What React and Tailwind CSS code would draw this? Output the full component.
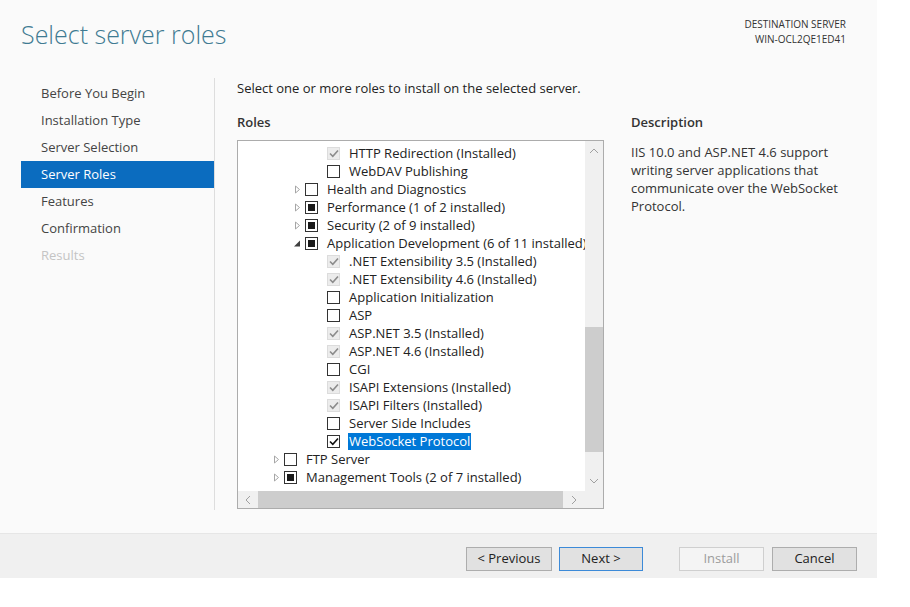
import React from "react";

const FONT = { fontFamily: '"Open Sans", "Noto Sans", sans-serif' };

function Box({ state }) {
  if (state === "installed") {
    return (
      <span className="flex h-[13px] w-[13px] shrink-0 items-center justify-center border border-[#dcdcdc] bg-[#ececec]">
        <svg width="10" height="9" viewBox="0 0 10 9">
          <path d="M1 4.5 L3.8 7.3 L9 1.5" fill="none" stroke="#8c8c8c" strokeWidth="1.6" />
        </svg>
      </span>
    );
  }
  if (state === "checked") {
    return (
      <span className="flex h-[13px] w-[13px] shrink-0 items-center justify-center border border-[#333] bg-white">
        <svg width="10" height="9" viewBox="0 0 10 9">
          <path d="M1 4.5 L3.8 7.3 L9 1.5" fill="none" stroke="#111" strokeWidth="1.6" />
        </svg>
      </span>
    );
  }
  if (state === "partial") {
    return (
      <span className="flex h-[13px] w-[13px] shrink-0 items-center justify-center border border-[#333] bg-white">
        <span className="h-[7px] w-[7px] bg-[#1a1a1a]" />
      </span>
    );
  }
  return <span className="h-[13px] w-[13px] shrink-0 border border-[#333] bg-white" />;
}

function Arrow({ type }) {
  if (type === "collapsed") {
    return (
      <svg width="13" height="9" viewBox="0 0 13 9" className="shrink-0">
        <path d="M3.5 1 L7.5 4.5 L3.5 8 Z" fill="none" stroke="#a6a6a6" strokeWidth="1" />
      </svg>
    );
  }
  if (type === "expanded") {
    return (
      <svg width="13" height="9" viewBox="0 0 13 9" className="shrink-0">
        <path d="M2 7.5 L8 7.5 L8 1.5 Z" fill="#404040" />
      </svg>
    );
  }
  return <span className="w-[13px] shrink-0" />;
}

const rows = [
  { l: 3, s: "installed", t: "HTTP Redirection (Installed)" },
  { l: 3, s: "empty", t: "WebDAV Publishing" },
  { l: 2, a: "collapsed", s: "empty", t: "Health and Diagnostics" },
  { l: 2, a: "collapsed", s: "partial", t: "Performance (1 of 2 installed)" },
  { l: 2, a: "collapsed", s: "partial", t: "Security (2 of 9 installed)" },
  { l: 2, a: "expanded", s: "partial", t: "Application Development (6 of 11 installed)" },
  { l: 3, s: "installed", t: ".NET Extensibility 3.5 (Installed)" },
  { l: 3, s: "installed", t: ".NET Extensibility 4.6 (Installed)" },
  { l: 3, s: "empty", t: "Application Initialization" },
  { l: 3, s: "empty", t: "ASP" },
  { l: 3, s: "installed", t: "ASP.NET 3.5 (Installed)" },
  { l: 3, s: "installed", t: "ASP.NET 4.6 (Installed)" },
  { l: 3, s: "empty", t: "CGI" },
  { l: 3, s: "installed", t: "ISAPI Extensions (Installed)" },
  { l: 3, s: "installed", t: "ISAPI Filters (Installed)" },
  { l: 3, s: "empty", t: "Server Side Includes" },
  { l: 3, s: "checked", t: "WebSocket Protocol", sel: true },
  { l: 1, a: "collapsed", s: "empty", t: "FTP Server" },
  { l: 1, a: "collapsed", s: "partial", t: "Management Tools (2 of 7 installed)" },
];

const indent = { 1: "pl-[33px]", 2: "pl-[54px]", 3: "pl-[76px]" };

const nav = [
  "Before You Begin",
  "Installation Type",
  "Server Selection",
  "Server Roles",
  "Features",
  "Confirmation",
  "Results",
];

function Chevron({ dir }) {
  const d = {
    up: "M1 5 L5 1 L9 5",
    down: "M1 1 L5 5 L9 1",
    left: "M5 1 L1 5 L5 9",
    right: "M1 1 L5 5 L1 9",
  }[dir];
  const horiz = dir === "left" || dir === "right";
  return (
    <svg width={horiz ? 6 : 10} height={horiz ? 10 : 6} viewBox={horiz ? "0 0 6 10" : "0 0 10 6"}>
      <path d={d} fill="none" stroke="#a0a0a0" strokeWidth="1" />
    </svg>
  );
}

function Button({ children, primary, disabled }) {
  return (
    <div
      className={
        "flex h-[24px] items-center justify-center border text-[13px] " +
        (primary
          ? "border-[#3c8ad8] bg-[#e1e1e1] text-[#222]"
          : disabled
          ? "border-[#cfcfcf] bg-[#f4f4f4] text-[#9c9c9c]"
          : "border-[#adadad] bg-[#e1e1e1] text-[#222]")
      }
    >
      {children}
    </div>
  );
}

export default function App() {
  return (
    <div className="h-[607px] w-[910px] overflow-hidden bg-white" style={FONT}>
      <div className="flex h-[578px] w-[877px] flex-col bg-[#fafafa]">
        {/* header */}
        <div className="flex h-[78px] justify-between pl-[21px] pr-[31px]">
          <div className="pt-[16px] text-[25px] font-light leading-[36px] text-[#3f7a92]">
            Select server roles
          </div>
          <div className="pt-[17px] text-right text-[10px] leading-[15px] text-[#333]">
            <div>DESTINATION SERVER</div>
            <div>WIN-OCL2QE1ED41</div>
          </div>
        </div>

        {/* body */}
        <div className="flex h-[455px]">
          {/* nav */}
          <div className="h-[432px] w-[215px] border-r border-[#dddddd] pl-[21px] pt-[2px]">
            {nav.map((n, i) => (
              <div
                key={n}
                className={
                  "flex h-[27px] items-center pl-[20px] text-[13px] " +
                  (i === 3
                    ? "bg-[#0b6cbf] text-white"
                    : i === 6
                    ? "text-[#c4c4c4]"
                    : "text-[#444]")
                }
              >
                {n}
              </div>
            ))}
          </div>

          {/* main */}
          <div className="flex flex-col pl-[22px]">
            <div className="h-[18px] pt-[1px] text-[13px] leading-[18px] text-[#222]">
              Select one or more roles to install on the selected server.
            </div>
            <div className="mt-[17px] h-[18px] text-[13px] font-semibold leading-[18px] text-[#333]">
              Roles
            </div>
            <div className="mt-[9px] flex h-[369px] w-[367px] flex-col border border-[#acacac] bg-white">
              <div className="flex h-[350px]">
                <div className="flex-1 overflow-hidden pt-[3px]">
                  {rows.map((r, i) => (
                    <div
                      key={i}
                      className={"flex h-[18px] items-center whitespace-nowrap text-[13px] text-[#222] " + indent[r.l]}
                    >
                      <Arrow type={r.a} />
                      <Box state={r.s} />
                      <span
                        className={
                          "ml-[8px] px-[1px] leading-[17px] " +
                          (r.sel ? "bg-[#0078d7] text-white" : "")
                        }
                      >
                        {r.t}
                      </span>
                    </div>
                  ))}
                </div>
                <div className="flex w-[18px] flex-col bg-[#f0f0f0]">
                  <div className="flex h-[20px] items-center justify-center">
                    <Chevron dir="up" />
                  </div>
                  <div className="mt-[166px] h-[125px] bg-[#cdcdcd]" />
                  <div className="flex-1" />
                  <div className="flex h-[20px] items-center justify-center">
                    <Chevron dir="down" />
                  </div>
                </div>
              </div>
              <div className="flex h-[17px] bg-[#f0f0f0]">
                <div className="flex w-[20px] items-center justify-center">
                  <Chevron dir="left" />
                </div>
                <div className="w-[305px] bg-[#cdcdcd]" />
                <div className="flex w-[22px] items-center justify-center">
                  <Chevron dir="right" />
                </div>
                <div className="flex-1" />
              </div>
            </div>
          </div>

          {/* description */}
          <div className="flex flex-col pl-[27px] pt-[35px]">
            <div className="h-[18px] text-[13px] font-semibold leading-[18px] text-[#333]">
              Description
            </div>
            <div className="mt-[12px] text-[13px] leading-[18px] text-[#333]">
              IIS 10.0 and ASP.NET 4.6 support
              <br />
              writing server applications that
              <br />
              communicate over the WebSocket
              <br />
              Protocol.
            </div>
          </div>
        </div>

        {/* footer */}
        <div className="flex h-[45px] items-start border-t border-[#e6e6e6] bg-[#f0f0f0] pl-[466px] pt-[13px]">
          <div className="w-[86px]">
            <Button>&lt; Previous</Button>
          </div>
          <div className="ml-[7px] w-[84px]">
            <Button primary>Next &gt;</Button>
          </div>
          <div className="ml-[36px] w-[85px]">
            <Button disabled>Install</Button>
          </div>
          <div className="ml-[8px] w-[85px]">
            <Button>Cancel</Button>
          </div>
        </div>
      </div>
    </div>
  );
}
